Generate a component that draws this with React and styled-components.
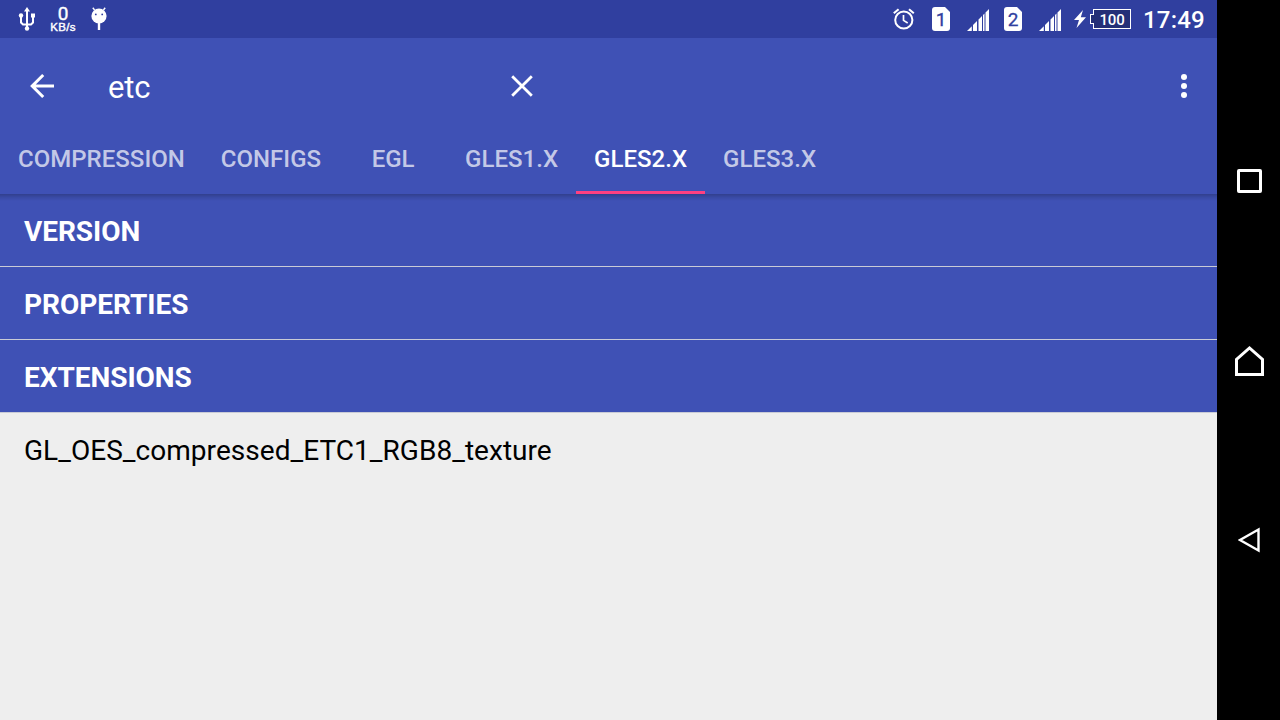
import React, { useState } from "react";
import styled, { createGlobalStyle } from "styled-components";

const GlobalStyle = createGlobalStyle`
  body {
    margin: 0;
    overflow: hidden;
    background: #000;
    font-family: Roboto, "Noto Sans", sans-serif;
  }
  * {
    box-sizing: border-box;
  }
  svg {
    display: block;
    flex: none;
  }
`;

const Device = styled.div`
  width: 1280px;
  height: 720px;
  display: flex;
  background: #000;
`;

const Screen = styled.div`
  width: 1217px;
  height: 720px;
  display: flex;
  flex-direction: column;
  background: #eeeeee;
`;

const StatusBar = styled.div`
  height: 38px;
  flex: none;
  display: flex;
  align-items: center;
  justify-content: space-between;
  padding: 0 13px 0 18px;
  background: #303f9f;
  color: white;
`;

const StatusGroup = styled.div`
  height: 38px;
  display: flex;
  align-items: center;
`;

const NetSpeed = styled.div`
  width: 28px;
  margin: 0 14px 0 13px;
  display: flex;
  flex-direction: column;
  align-items: center;
  padding-top: 1px;
  font-family: "Liberation Sans", Arial, sans-serif;
  font-size: 11.5px;
  line-height: 12px;
  letter-spacing: 0.3px;
  white-space: nowrap;
  -webkit-text-stroke: 0.4px white;

  .num {
    font-family: Roboto, sans-serif;
    font-size: 19px;
    line-height: 15px;
    letter-spacing: 0;
  }
`;

const SimCard = styled.div`
  width: 18px;
  height: 24px;
  margin: 0 17px 0 ${(props) => props.$gap}px;
  border-radius: 3px;
  background: white;
  clip-path: polygon(0 0, 13px 0, 18px 5px, 18px 100%, 0 100%);
  color: #303f9f;
  font-size: 19px;
  font-weight: 400;
  line-height: 25px;
  text-align: center;
  -webkit-text-stroke: 0.3px #303f9f;
`;

const Battery = styled.div`
  display: flex;
  align-items: center;
  margin-left: 13px;

  .tip {
    width: 4px;
    height: 10px;
    margin-left: 4px;
    margin-right: -1px;
    border: 1px solid white;
    border-right: none;
    background: #242f77;
    z-index: 1;
  }
  .level {
    width: 38px;
    height: 20px;
    border: 1px solid white;
    background: #242f77;
    font-size: 15px;
    font-weight: 500;
    line-height: 20px;
    letter-spacing: -0.2px;
    text-align: center;
  }
`;

const Clock = styled.div`
  width: 61px;
  margin-left: 12px;
  font-size: 24px;
  font-weight: 500;
  line-height: 38px;
  padding-top: 1px;
  white-space: nowrap;
  letter-spacing: 0.2px;
`;

const AppBar = styled.div`
  position: relative;
  height: 156px;
  flex: none;
  background: #3f51b5;
  color: white;

  /* drop shadow over the first list row */
  &:after {
    content: "";
    position: absolute;
    left: 0;
    right: 0;
    top: 100%;
    height: 7px;
    background: linear-gradient(rgba(0, 0, 0, 0.22), rgba(0, 0, 0, 0.09) 50%, transparent);
  }
`;

const Toolbar = styled.div`
  height: 96px;
  display: flex;
  align-items: center;
  padding: 0 17px 0 26px;
`;

const SearchInput = styled.div`
  width: 399px;
  margin-left: 50px;
  padding-top: 4px;
  font-size: 31px;
  line-height: 38px;
  letter-spacing: -0.2px;
`;

const IconButton = styled.button`
  display: flex;
  align-items: center;
  justify-content: center;
  width: ${(props) => props.$width}px;
  height: 48px;
  padding: 0;
  border: none;
  background: none;
  margin-left: ${(props) => (props.$end ? "auto" : "0")};
`;

const Tabs = styled.div`
  height: 60px;
  display: flex;
`;

const Tab = styled.div`
  height: 60px;
  min-width: 108px;
  padding: 10px 18px 0;
  border-bottom: 3px solid ${(props) => (props.$active ? "#ff4081" : "transparent")};
  color: ${(props) => (props.$active ? "white" : "rgba(255, 255, 255, 0.7)")};
  font-size: 24px;
  font-weight: 500;
  line-height: 30px;
  letter-spacing: 0.02px;
  text-align: center;
  white-space: nowrap;
  cursor: pointer;
`;

const GroupRow = styled.div`
  height: 73px;
  flex: none;
  padding: 1px 0 0 24px;
  border-bottom: 1px solid #c9cbd6;
  background: #3f51b5;
  color: white;
  font-size: 28px;
  font-weight: 700;
  line-height: 74px;
  letter-spacing: -0.04px;
`;

const ItemRow = styled.div`
  padding-left: 24px;
  color: black;
  font-size: 28px;
  line-height: 75px;
  letter-spacing: 0.045px;
`;

const NavBar = styled.div`
  width: 63px;
  height: 720px;
  padding: 91px 0 90px 2px;
  display: grid;
  grid-template-rows: repeat(3, 1fr);
  place-items: center;
`;

function UsbIcon() {
  return (
    <svg width="18" height="24" viewBox="0 0 18 24" fill="none" stroke="white" strokeWidth="2">
      <path d="M9 4v17M9 17.5H5L3 15.500V9M9 17.500h4l2-2V9" />
      <path d="M9 0l3 4.500H6z" fill="white" stroke="none" />
      <circle cx="9" cy="21.500" r="2.200" fill="white" stroke="none" />
      <path d="M13 6.500h4v4h-4z" fill="white" stroke="none" />
      <circle cx="3" cy="8.500" r="2.200" fill="white" stroke="none" />
    </svg>
  );
}

function DebugIcon() {
  return (
    <svg width="16" height="24" viewBox="0 0 16 24">
      <path d="M3.6 3L1.8.8M12.4 3L14.2.8" stroke="white" strokeWidth="1.4" />
      <circle cx="8" cy="9" r="7.6" fill="white" />
      <path d="M8 16v7" stroke="white" strokeWidth="2.4" />
      <circle cx="4.8" cy="7.400" r="0.900" fill="#303f9f" />
      <circle cx="11.2" cy="7.400" r="0.900" fill="#303f9f" />
    </svg>
  );
}

function AlarmIcon() {
  return (
    <svg width="22" height="22" viewBox="0 0 22 22" fill="none" stroke="white">
      <circle cx="10.800" cy="12" r="8.6" strokeWidth="2" />
      <path d="M10.500 7v5.4l4.2 2.6" strokeWidth="1.7" />
      <path d="M.8 5.2L5.600 1.2M20.800 5.2L16 1.2" strokeWidth="2.1" />
    </svg>
  );
}

function SignalIcon() {
  return (
    <svg width="22" height="24" viewBox="0 0 22 24" fill="white">
      <path d="M0 24l4.800-4.800V24zM6 18l4-4v10H6zM11.500 12.500L15 9v15h-3.500zM16 8l1.500-1.500V24H16zM18.500 5.500L22 2v22h-3.500z" />
    </svg>
  );
}

function BoltIcon() {
  return (
    <svg width="12" height="18" viewBox="0 0 12 18">
      <path d="M9 0L0 10h5L2.5 18L12 7.2H6.8z" fill="white" />
    </svg>
  );
}

const tabs = ["COMPRESSION", "CONFIGS", "EGL", "GLES1.X", "GLES2.X", "GLES3.X"];
const groups = ["VERSION", "PROPERTIES", "EXTENSIONS"];

export default function App() {
  const [current, setCurrent] = useState("GLES2.X");

  return (
    <Device>
      <GlobalStyle />
      <Screen>
        <StatusBar>
          <StatusGroup>
            <UsbIcon />
            <NetSpeed>
              <div className="num">0</div>
              <div>KB/s</div>
            </NetSpeed>
            <DebugIcon />
          </StatusGroup>
          <StatusGroup>
            <AlarmIcon />
            <SimCard $gap={17}>1</SimCard>
            <SignalIcon />
            <SimCard $gap={15}>2</SimCard>
            <SignalIcon />
            <Battery>
              <BoltIcon />
              <div className="tip" />
              <div className="level">100</div>
            </Battery>
            <Clock>17:49</Clock>
          </StatusGroup>
        </StatusBar>

        <AppBar>
          <Toolbar>
            <IconButton $width={32} aria-label="Back">
              <svg width="32" height="32" viewBox="0 0 32 32" fill="none" stroke="white" strokeWidth="3">
                <path d="M28 16H6M17.2 5L6.2 16l11 11" />
              </svg>
            </IconButton>
            <SearchInput>etc</SearchInput>
            <IconButton $width={30} aria-label="Clear">
              <svg width="22" height="22" viewBox="0 0 22 22" stroke="white" strokeWidth="2.8">
                <path d="M1.2 1.2l19.6 19.6M20.8 1.2L1.2 20.8" />
              </svg>
            </IconButton>
            <IconButton $width={32} $end aria-label="More">
              <svg width="6" height="24" viewBox="0 0 6 24" fill="white">
                <circle cx="3" cy="3" r="3" />
                <circle cx="3" cy="12" r="3" />
                <circle cx="3" cy="21" r="3" />
              </svg>
            </IconButton>
          </Toolbar>
          <Tabs>
            {tabs.map((tab) => (
              <Tab key={tab} $active={tab === current} onClick={() => setCurrent(tab)}>
                {tab}
              </Tab>
            ))}
          </Tabs>
        </AppBar>

        {groups.map((group) => (
          <GroupRow key={group}>{group}</GroupRow>
        ))}
        <ItemRow>GL_OES_compressed_ETC1_RGB8_texture</ItemRow>
      </Screen>

      <NavBar>
        <svg width="25" height="24" viewBox="0 0 25 24" fill="none" stroke="white" strokeWidth="3">
          <rect x="1.5" y="1.5" width="22" height="21" rx="0.5" />
        </svg>
        <svg width="29" height="32" viewBox="0 0 29 32" fill="none" stroke="white" strokeWidth="3">
          <path d="M1.500 30.500V15.500L14.500 4l13 11.500V30.500z" />
        </svg>
        <svg width="24" height="26" viewBox="0 0 24 26" fill="none" stroke="white" strokeWidth="2.4">
          <path d="M20.500 2.500v21L2 13z" />
        </svg>
      </NavBar>
    </Device>
  );
}
